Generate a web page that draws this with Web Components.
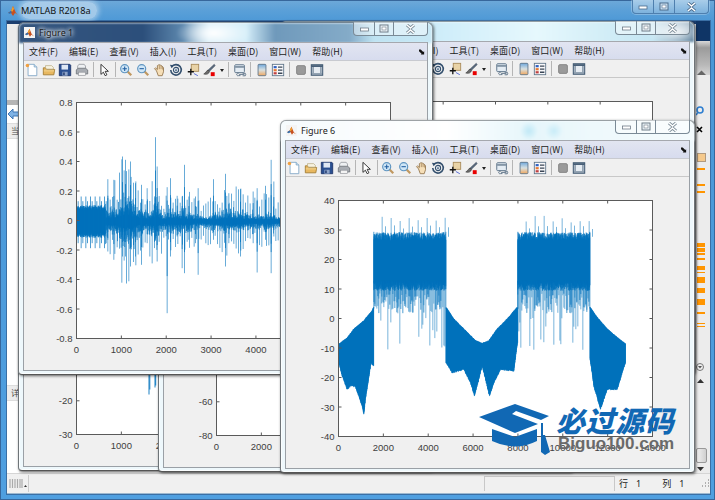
<!DOCTYPE html>
<html>
<head>
<meta charset="utf-8">
<style>
  html, body { margin: 0; padding: 0; background: #4a90d0; }
</style>
</head>
<body>
<ml-main>
  <ml-figure x="18" y="118" label="Figure 2">
    <ml-plot xstep="1000" ymax="40" ystep="10" ymin="-30" signal="stub"></ml-plot>
  </ml-figure>
  <ml-figure x="158" y="119" label="Figure 3">
    <ml-plot xstep="2000" ymax="60" ystep="20" ymin="-80"></ml-plot>
  </ml-figure>
  <ml-figure x="280" y="21" label="Figure 5" style="--glass:radial-gradient(ellipse 30px 14px at 395px 10px,#ffffffcc,transparent),linear-gradient(90deg,#a8cfe6,#d0eefa 40%,#e6f8fd 62%,#c4e6f3 90%,#49708f 100%)">
    <ml-plot xstep="2000" intervals="6" ymax="40" ystep="10" ymin="-40"></ml-plot>
  </ml-figure>
  <ml-figure x="18" y="22" label="Figure 1" style="--glass:radial-gradient(ellipse 38px 16px at 195px 10px,#ffffff,transparent),linear-gradient(90deg,#35567f 0,#2c4f7b 30%,#5f8ab0 40%,#cfeaf7 46%,#d4eef9 55%,#6f99bb 62%,#84abc8 80%,#bfe3f2 86%,#c8e8f5 100%)">
    <ml-plot xstep="1000" ymax="0.8" ystep="0.2" ymin="-0.8" signal="fig1"></ml-plot>
  </ml-figure>
  <ml-figure x="280" y="120" label="Figure 6" style="--glass:radial-gradient(circle 9px at 248px 10px,#bfe8f6,transparent),radial-gradient(circle 9px at 273px 10px,#c8ecf8,transparent),linear-gradient(90deg,#f6fbfd,#ffffff 40%,#e6f6fb 60%,#eef9fc 75%,#f4fbfd 100%)">
    <ml-plot xstep="2000" ymax="40" ystep="10" ymin="-40" signal="fig6"></ml-plot>
  </ml-figure>
  <ml-watermark></ml-watermark>
</ml-main>

<script>
// small seeded generator so the plots come out the same every time
function seeded(a) {
  return function () {
    a = (a + 0x6D2B79F5) | 0;
    let t = Math.imul(a ^ (a >>> 15), 1 | a);
    t = (t + Math.imul(t ^ (t >>> 7), 61 | t)) ^ t;
    return ((t ^ (t >>> 14)) >>> 0) / 4294967296;
  };
}

function lerpTable(table, x) {
  if (x <= table[0][0]) return table[0][1];
  for (let i = 1; i < table.length; i++) {
    if (x <= table[i][0]) {
      const [x0, y0] = table[i - 1], [x1, y1] = table[i];
      return y0 + (y1 - y0) * (x - x0) / (x1 - x0);
    }
  }
  return table[table.length - 1][1];
}

const SIGNALS = {
  // envelopes were read off at 3x, so the tables stay in those units
  fig6() {
    const rnd = seeded(61);
    const top = [[25,450],[50,432],[70,405],[100,380],[125,350],[129,340],[347,340],[370,375],[400,405],[435,440],[455,448],[475,440],[500,405],[530,375],[560,340],[779,340],[800,370],[830,405],[860,430],[885,450]];
    const bot = [[25,510],[35,550],[50,590],[60,580],[75,582],[95,640],[100,665],[105,620],[122,510],[129,520],[347,510],[365,540],[400,530],[420,570],[432,610],[445,560],[455,520],[465,560],[477,610],[490,570],[510,530],[550,535],[561,450],[779,500],[790,580],[810,650],[830,590],[860,590],[885,510]];
    const inBlock = x => (x >= 130 && x <= 346) || (x >= 562 && x <= 778);
    let d = '', light = '';
    const seg = (x, a, b) => `M${((x - 24) / 3).toFixed(2)} ${((a - 21) / 3).toFixed(1)}V${((b - 21) / 3).toFixed(1)}`;
    for (let x = 25; x <= 885; x += 0.5) {
      if (inBlock(x)) {
        d += seg(x, 116 + rnd() * 26, 262 + rnd() * 30);
      } else {
        d += seg(x, lerpTable(top, x) + rnd() * 3, lerpTable(bot, x) - rnd() * 6);
      }
    }
    [130, 562].forEach(start => {
      for (let x = start + 25, i = 0; x < start + 218; x += 27, i++) {
        light += seg(x, 65 + rnd() * 22, 130);
        light += seg(x + 10, 95 + rnd() * 14, 130);
      }
      for (let x = start; x < start + 216; x += 3) {
        const r = rnd();
        const end = r > 0.8 ? 370 + rnd() * 100 : 300 + rnd() * 60;
        light += seg(x, 262, end);
        if (r < 0.45) d += seg(x, 262, 300 + rnd() * 60);
      }
      d += seg(start, 115, 345) + seg(start + 216, 115, 345);
    });
    return [{ d, width: 0.7 }, { d: light, width: 0.75, opacity: 0.7 }];
  },
  fig1() {
    const rnd = seeded(11);
    const amp = [[135,38],[160,46],[175,60],[190,92],[215,74],[240,40],[262,28],[285,62],[310,22],[330,36],[370,34],[420,16],[470,26],[500,36],[545,34],[570,18],[620,24],[660,16],[800,16]];
    const spikes = [[142,238,420],[160,240,480],[186,170,470],[195,180,470],[210,185,500],[225,250,470],[243,255,495],[260,265,430],[285,112,420],[290,200,485],[320,262,640],[330,235,470],[350,288,410],[365,290,505],[372,195,520],[385,290,420],[413,265,525],[405,290,430],[459,238,420],[495,222,500],[505,280,430],[540,268,470],[578,275,430],[590,265,518],[615,258,420],[632,180,520],[640,245,410]];
    const seg = (x, a, b) => `M${((x - 48) / 3).toFixed(2)} ${((a - 8) / 3).toFixed(1)}V${((b - 8) / 3).toFixed(1)}`;
    let d = '', light = '';
    for (let x = 48; x < 135; x += 14) {
      d += seg(x, 290, 445) + seg(x + 5, 304, 430);
    }
    for (let x = 48; x < 135; x += 0.5) {
      const a = 30 + rnd() * 16;
      d += seg(x, 362 - a, 362 + a + 6);
    }
    for (let x = 135; x < 800; x += 0.6) {
      const a = lerpTable(amp, x);
      const up = 0.2 + rnd() * rnd() * 1.1, down = 0.2 + rnd() * rnd() * 1.1;
      d += seg(x, 364 - a * up, 366 + a * down);
    }
    for (let x = 135; x < 800; x += 7) {
      const a = lerpTable(amp, x) + 18;
      light += seg(x, 362 - a * (0.8 + rnd() * 1.2), 362 + a * (0.8 + rnd() * 1.2));
    }
    spikes.forEach(([x, a, b]) => { light += seg(x, a, b); d += seg(x, a + (362 - a) * 0.4, b - (b - 362) * 0.4); });
    return [{ d, width: 0.7 }, { d: light, width: 0.8, opacity: 0.75 }];
  },
  stub() {
    // only the feet of the spectrum show below Figure 1
    const d = 'M72.500 160V196M73.300 160V191M78.500 160V189M79.200 160V187M82.500 160V193M83.500 160V187M84.500 160V191';
    return [{ d, width: 1, opacity: 0.9 }];
  }
};

const ICONS = {
  new: `<path d="M3.500 1.500h7l3 3v10h-10z" fill="#fff" stroke="#7fa6c6"/><path d="M10.500 1.500v3h3" fill="#dbe9f4" stroke="#7fa6c6"/><circle cx="2.800" cy="2.800" r="2" fill="#f0a040"/>`,
  open: `<path d="M1.500 5.500v8h12l1-6h-9l-1-2z" fill="#e8b860" stroke="#a07a30"/><path d="M4 5V3h7l2 2v2H5z" fill="#f7f2e0" stroke="#b0a070" stroke-width=".7"/><path d="M2 9h12" stroke="#f4d898"/>`,
  save: `<path d="M1.500 1.500h12l1 1v12h-13z" fill="#2a4f90" stroke="#1d3468"/><rect x="4" y="2" width="7.500" height="5.500" fill="#dfe8f4"/><rect x="5" y="10" width="6" height="4.500" fill="#8ea4c8"/><rect x="6" y="10.800" width="1.600" height="3" fill="#1d3468"/>`,
  print: `<path d="M4.500 1.500h6l1.500 2v4h-9v-4z" fill="#eef0f2" stroke="#9a9ea4"/><path d="M1.500 8l2-2h8.500l2.500 2v4.500h-13z" fill="#a8acb2" stroke="#74787e"/><rect x="4" y="10.500" width="8" height="4" fill="#f3f3f3" stroke="#8a8e94" stroke-width=".7"/>`,
  arrow: `<path d="M4.500 1.500v11.500l2.800-2.500 2 4 2-1-2-4h3.700z" fill="#fff" stroke="#222" stroke-linejoin="round"/>`,
  zoomin: `<path d="M9.500 9.500l4.500 4.500" stroke="#c09860" stroke-width="2.600"/><circle cx="6.500" cy="6.500" r="4.600" fill="#cfe6f6" stroke="#5e94c0" stroke-width="1.300"/><path d="M4 6.500h5M6.500 4v5" stroke="#1f5da0" stroke-width="1.200"/>`,
  zoomout: `<path d="M9.500 9.500l4.500 4.500" stroke="#c09860" stroke-width="2.600"/><circle cx="6.500" cy="6.500" r="4.600" fill="#cfe6f6" stroke="#5e94c0" stroke-width="1.300"/><path d="M4 6.500h5" stroke="#1f5da0" stroke-width="1.200"/>`,
  hand: `<path d="M4 9L1.800 6.500l1-1L5 7.500V3l1.300-.8L7.200 2l1 .2 1 .8 1 .3 1 1.200.8 1V10l-1.500 4.500H6z" fill="#f6dfb8" stroke="#8a6a40" stroke-width=".9"/><path d="M7.200 2.500V7M9.200 3v4M11 4.300V7.500" stroke="#8a6a40" stroke-width=".7"/>`,
  rotate: `<path d="M3 4.500A6 6 0 1 1 2 8" fill="none" stroke="#34506e" stroke-width="1.800"/><path d="M1 2l4.500.5L3 6z" fill="#34506e"/><circle cx="8" cy="8" r="3" fill="#dfe7ef" stroke="#34506e" stroke-width="1.200"/><circle cx="8" cy="8" r="1" fill="#34506e"/>`,
  cursor: `<rect x="6" y="1.500" width="8.500" height="8" fill="#e9d3a6" stroke="#a88a58"/><path d="M2 10h7M5.500 6.500V14" stroke="#111" stroke-width="1.500"/><path d="M9 12l4.500 2.500" stroke="#4a5fd0"/>`,
  brush: `<path d="M14 1.500L7 8l1.500 1.500L15 3z" fill="#5a6a7e" stroke="#3a4656" stroke-width=".6"/><path d="M7 8c-2 .5-2 3-5 4.500 2.500 1 6 .5 6.500-3z" fill="#6b6b6b" stroke="#222" stroke-width=".6"/><rect x="10" y="10.500" width="4.500" height="4.500" fill="#e80000"/>`,
  link: `<rect x="2" y="2" width="11" height="9" rx="1" fill="#e4ecf3" stroke="#5e7488" stroke-width="1.100"/><path d="M2.500 4.500h10" stroke="#5e7488" stroke-width="1.500"/><path d="M7 13h6M6.500 11.800a1.500 1.500 0 1 0 0 2.600h2M11 11.800h1.500a1.500 1.500 0 1 1 0 2.800H11" fill="none" stroke="#5e7488" stroke-width="1.100"/>`,
  colorbar: `<rect x="3.500" y="1.500" width="9" height="13" rx="1" fill="url(#cb)" stroke="#5e7488"/>`,
  legend: `<rect x="1.500" y="1.500" width="13" height="13" fill="#f8f8fa" stroke="#5e7488"/><rect x="3" y="3.500" width="3.500" height="2.500" fill="#3060c0"/><rect x="3" y="7" width="3.500" height="2.500" fill="#e87830"/><rect x="3" y="10.500" width="3.500" height="2.500" fill="#c04040"/><path d="M8 4.700h5M8 8.200h5M8 11.700h5" stroke="#3a4656" stroke-width="1.500"/>`,
  square: `<rect x="3" y="3" width="10" height="10" rx="1.500" fill="#9a9a9a" stroke="#808080"/>`,
  window: `<rect x="1.500" y="2" width="13" height="12" fill="#e6ecf2" stroke="#3f5870" stroke-width="1.200"/><path d="M1.500 3.500h13" stroke="#3f5870" stroke-width="2"/><path d="M3.500 4v7.500M12.500 4v7.500M2 12.500h12" stroke="#3f5870"/>`
};

class MlMain extends HTMLElement {
  constructor() {
    super();
    this.attachShadow({ mode: 'open' });
  }

  connectedCallback() {
    const marks = [[168,2],[184,2],[191,2],[243,4],[248,4],[253,2],[258,2],[266,4],[272,1],[277,6],[288,5],[299,6],[312,2],[323,1],[326,1]];
    this.shadowRoot.innerHTML = `
      <style>
        :host {
          display: block;
          position: relative;
          width: 715px;
          height: 500px;
          overflow: hidden;
          font-family: "Noto Sans", "Noto Sans CJK SC", sans-serif;
          background: linear-gradient(180deg, #6ea9d9 0, #5ba0d8 10px, #4a97d6 24px, #4f9fe0 100%);
          box-shadow: inset 0 0 0 1px #37679c;
        }
        .title {
          height: 21px;
          display: flex;
          align-items: center;
          padding-left: 8px;
          gap: 3px;
          font-size: 9.200px;
          color: #111;
        }
        .title span {
          padding: 2px 6px 2px 0;
          border-radius: 8px;
          background: #c4dcf0b0;
          box-shadow: 0 0 5px 2px #c4dcf0b0;
        }
        .controls {
          position: absolute;
          right: 6px;
          top: 0;
          display: flex;
          height: 13px;
          border: 1px solid #4e7fae;
          border-top: 0;
          border-radius: 0 0 4px 4px;
          background: linear-gradient(#a9cde9, #7db2dd);
          box-shadow: 0 0 0 1px #ffffff40;
        }
        .controls i {
          display: flex;
          align-items: center;
          justify-content: center;
          height: 13px;
          border-left: 1px solid #4e7fae;
        }
        .controls i:first-child { border-left: 0; }
        .client {
          height: 473px;
          margin: 0 5px 0 7px;
          display: flex;
          flex-direction: column;
          background: #f0f0f0;
          box-shadow: 0 0 0 1px #3a6fa5;
        }
        .work {
          flex: 1;
          display: flex;
          min-height: 0;
          border-bottom: 1px solid #d5d5d5;
        }
        .left {
          width: 12px;
          background: #fff;
          display: flex;
          flex-direction: column;
          font-size: 8px;
          color: #444;
        }
        .left .navy { height: 3px; background: #1b3e6f; }
        .left .grey { height: 76px; background: #ececec; border-bottom: 5px solid #b5b5b5; }
        .left .back { height: 18px; display: flex; align-items: center; }
        .left .tab { height: 14px; background: #ececec; border: solid #ddd; border-width: 1px 0; text-align: right; line-height: 13px; }
        .left .fill { flex: 1; }
        .mid { flex: 1; background: #f0f0f0; border-top: 3px solid #1b3e6f; }
        .right {
          width: 14px;
          display: flex;
          flex-direction: column;
          background: #ececec;
          position: relative;
        }
        .right .navy { height: 20px; background: #0f3566; }
        .right .head { height: 34px; background: linear-gradient(#d8d8d8 0, #9b9b9b 20%, #b8b8b8 70%, #d5d5d5); }
        .right .mark { position: absolute; left: 1px; width: 8px; background: #ff9500; }
        .right .box { position: absolute; left: 1px; top: 132px; width: 7px; height: 7px; background: #f5c98c; border: 1px solid #b09a80; }
        .right .thumb { position: absolute; left: 0; top: 427px; width: 9px; height: 13px; background: linear-gradient(90deg, #f0f0f0, #cfcfcf); border: 1px solid #999; border-radius: 2px; }
        .right svg { position: absolute; }
        .status {
          height: 19px;
          display: flex;
          align-items: center;
          background: #f0f0f0;
          font-size: 9px;
          color: #222;
          border-bottom: 1px solid #9db8cf;
        }
        .status .grip { width: 22px; padding-left: 2px; box-sizing: border-box; height: 17px; display: flex; align-items: center; border-right: 1px solid #ccc; }
        .status .spacer { flex: 1; }
        .status .box { width: 131px; height: 15px; border: solid #c8c8c8; border-width: 1px 1px 0 1px; box-sizing: border-box; }
        .status .pos { width: 82px; display: flex; padding-left: 4px; box-sizing: border-box; white-space: nowrap; }
        .status .gap8 { margin-right: 8px; }
        .status .gap21 { margin-right: 21px; }
      </style>
      <div class="title">
        <svg width="10" height="12" viewBox="0 0 10 12"><path d="M0 8l3-2 2-5 3 7 2 2-3-2-2 3-2-3z" fill="#c8501e"/><path d="M3 6l2-5 1 3-2 3z" fill="#f0a030"/><path d="M0 8l3-2 1 1-2 2z" fill="#2f6fb0"/></svg>
        <span>MATLAB R2018a</span>
      </div>
      <div class="controls">
        <i style="width:20px"><svg width="11" height="6"><rect x="1" y="2" width="8" height="3" fill="#fff" stroke="#4a6a8a" stroke-width=".8"/></svg></i>
        <i style="width:20px"><svg width="11" height="9"><rect x="1" y="1" width="8" height="7" fill="#cfe3f2" stroke="#4a6a8a" stroke-width="1"/><rect x="3" y="3" width="4" height="3" fill="#fff" stroke="#4a6a8a" stroke-width=".6"/></svg></i>
        <i style="width:33px"><svg width="11" height="10" viewBox="0 0 11 10"><path d="M2 1l3.500 3L9 1M2 9l3.500-3L9 9" fill="none" stroke="#4a6a8a" stroke-width="3"/><path d="M2 1l3.500 3L9 1M2 9l3.500-3L9 9" fill="none" stroke="#fff" stroke-width="1.400"/></svg></i>
      </div>
      <div class="client">
        <div class="work">
          <div class="left">
            <div class="navy"></div>
            <div class="grey"></div>
            <div class="back"><svg width="12" height="12"><path d="M1 6l5-5v3h6v4H6v3z" fill="#7fb2e4" stroke="#3f77b5"/></svg></div>
            <div class="tab">当</div>
            <div class="fill"></div>
            <div class="tab">详</div>
            <div class="fill" style="flex:0 0 72px"></div>
          </div>
          <div class="mid"></div>
          <div class="right">
            <div class="navy"></div>
            <div class="head"><svg style="left:1px;top:49px" width="9" height="5"><path d="M0 5l4.500-4.500L9 5z" fill="#666"/></svg></div>
            ${marks.map(([y, h]) => `<div class="mark" style="top:${y - 21}px;height:${h}px"></div>`).join('')}
            <div class="box"></div>
            <svg style="left:0;top:85px" width="10" height="11"><circle cx="4" cy="4" r="3" fill="none" stroke="#2f7fd0" stroke-width="1.600"/><path d="M1.500 7L0 9" stroke="#2f7fd0" stroke-width="1.500"/></svg>
            <svg style="left:0;top:105px" width="8" height="8"><path d="M1 1l5 5M6 1L1 6" stroke="#000" stroke-width="1.600"/></svg>
            <svg style="left:0;top:342px" width="9" height="9"><circle cx="4" cy="4" r="3.500" fill="#eee" stroke="#777"/><path d="M2 3l2 2.500L6 3z" fill="#555"/></svg>
            <svg style="left:1px;top:358px" width="7" height="5"><path d="M0 4l3.500-4L7 4z" fill="#333"/></svg>
            <div class="thumb"></div>
            <svg style="left:1px;top:446px" width="7" height="5"><path d="M0 0l3.500 4L7 0z" fill="#333"/></svg>
          </div>
        </div>
        <div class="status">
          <div class="grip"><svg width="18" height="11"><path d="M1 1v9M3.500 1v9M6 1v9M8.500 1v9M11 1v9M13 1v9" stroke="#aaa" stroke-width="1.200"/><path d="M15 9l1.500-2L18 9z" fill="#333"/></svg></div>
          <div class="spacer"></div>
          <div class="box"></div>
          <div class="pos"><span class="gap8">行</span><span class="gap21">1</span><span class="gap8">列</span><span>1</span></div>
          <svg width="9" height="9" style="margin-left:4px"><path d="M7 1h1M4 4h1M7 4h1M1 7h1M4 7h1M7 7h1" stroke="#999" stroke-width="1.500"/></svg>
        </div>
      </div>
      <slot></slot>
    `;
  }
}

class MlMenu extends HTMLElement {
  constructor() {
    super();
    this.attachShadow({ mode: 'open' });
  }

  connectedCallback() {
    const items = ['文件(F)', '编辑(E)', '查看(V)', '插入(I)', '工具(T)', '桌面(D)', '窗口(W)', '帮助(H)'];
    this.shadowRoot.innerHTML = `
      <style>
        :host {
          display: flex;
          align-items: center;
          box-sizing: border-box;
          height: 19px;
          padding: 0 2px 0 5px;
          gap: 11px;
          background: linear-gradient(#e2e5f1, #d7dcee);
          border-top: 1px solid #a5a8ae;
          border-bottom: 1px solid #c8cad0;
          font: 9px "Noto Sans CJK SC", "Noto Sans", sans-serif;
          color: #222;
          white-space: nowrap;
        }
        svg { margin-left: auto; }
      </style>
      ${items.map(t => `<span>${t}</span>`).join('')}
      <svg width="6" height="6" viewBox="0 0 7 7"><path d="M0 0.500h2l3 3 1-1v4H2l1-1-3-3z" fill="#111"/></svg>
    `;
  }
}

class MlToolbar extends HTMLElement {
  constructor() {
    super();
    this.attachShadow({ mode: 'open' });
  }

  connectedCallback() {
    const row = ['new', 'open', 'save', 'print', '|', 'arrow', '|', 'zoomin', 'zoomout', 'hand', 'rotate', 'cursor', 'brush', 'v', '|', 'link', '|', 'colorbar', 'legend', '|', 'square', 'window'];
    const cell = name => {
      if (name === '|') return '<u></u>';
      if (name === 'v') return '<svg class="drop" width="8" height="16"><path d="M2 7h4L4 10z" fill="#222"/></svg>';
      return `<span><svg width="14" height="14" viewBox="0 0 16 16">${ICONS[name]}</svg></span>`;
    };
    this.shadowRoot.innerHTML = `
      <style>
        :host {
          display: flex;
          align-items: center;
          box-sizing: border-box;
          height: 18px;
          background: #f0f0f0;
          border-bottom: 1px solid #c8c8c8;
        }
        span { flex: none; width: 16.600px; display: flex; justify-content: center; }
        span svg { filter: blur(.3px); }
        svg.drop { flex: none; }
        u { flex: none; width: 1px; height: 15px; background: #b5b5b5; margin: 0 2.300px; }
      </style>
      <svg width="0" height="0" style="position:absolute"><defs><linearGradient id="cb" x1="0" y1="0" x2="0" y2="1"><stop offset="0" stop-color="#6fa8dc"/><stop offset=".5" stop-color="#d8e0e0"/><stop offset="1" stop-color="#f0a860"/></linearGradient></defs></svg>
      ${row.map(cell).join('')}
    `;
  }
}

class MlFigure extends HTMLElement {
  constructor() {
    super();
    this.attachShadow({ mode: 'open' });
  }

  connectedCallback() {
    this.style.left = this.getAttribute('x') + 'px';
    this.style.top = this.getAttribute('y') + 'px';
    this.shadowRoot.innerHTML = `
      <style>
        :host {
          display: block;
          position: absolute;
          width: 415px;
          height: 353px;
          box-sizing: border-box;
          padding: 0 4px 5px;
          border: 1px solid #6e7478;
          border-bottom-color: #555;
          border-radius: 6px 6px 4px 4px;
          background: #eef8fc;
          box-shadow: 1px 1px 3px #0009, inset 0 0 0 1px #ffffffb0;
        }
        .glass {
          position: absolute;
          left: 0;
          right: 0;
          top: 0;
          height: 20px;
          border-radius: 5px 5px 0 0;
          background: var(--glass, #dff2fa);
          filter: blur(1px);
        }
        .title {
          position: relative;
          height: 19px;
          display: flex;
          align-items: center;
          gap: 4px;
          padding-left: 1px;
          font: 9px "Noto Sans", sans-serif;
          color: #1a1a1a;
        }
        .title span { text-shadow: 0 0 4px #fff, 0 0 4px #fff, 0 0 6px #fff; }
        .title svg { background: #f4f4f4; flex: none; }
        .controls {
          position: absolute;
          right: 4px;
          top: -1px;
          height: 13px;
          display: flex;
          border: 1px solid #7a8a96;
          border-top: 0;
          border-radius: 0 0 4px 4px;
          background: #ffffff70;
        }
        .controls i {
          display: flex;
          align-items: center;
          justify-content: center;
          border-left: 1px solid #7a8a96;
        }
        .controls i:first-child { border-left: 0; }
        .client {
          position: relative;
          height: 328px;
          display: flex;
          flex-direction: column;
          border: 1px solid #9aa0a6;
          border-top: 0;
          background: #f0f0f0;
        }
        .canvas { flex: 1; min-height: 0; }
      </style>
      <div class="glass"></div>
      <div class="title">
        <svg width="11" height="11" viewBox="0 0 12 12"><path d="M1 8l3-2 2-4 2.500 6L11 10 8 8.500 6.500 10.500 5 8z" fill="#c8501e"/><path d="M4 6l2-4 .800 3-2 2z" fill="#f0a030"/><path d="M1 8l3-2 1 1.500-2 1.500z" fill="#2f6fb0"/></svg>
        <span>${this.getAttribute('label')}</span>
      </div>
      <div class="controls">
        <i style="width:20px"><svg width="11" height="6"><rect x="1.500" y="2" width="8" height="3" fill="#fff" stroke="#6f7c88" stroke-width=".8"/></svg></i>
        <i style="width:18px"><svg width="11" height="9"><rect x="1" y="1" width="8" height="7" fill="#eef6fa" stroke="#6f7c88"/><rect x="3" y="3" width="4" height="3" fill="#fff" stroke="#6f7c88" stroke-width=".6"/></svg></i>
        <i style="width:33px"><svg width="11" height="10" viewBox="0 0 11 10"><path d="M2 1l3.500 3L9 1M2 9l3.500-3L9 9" fill="none" stroke="#7a8a96" stroke-width="3"/><path d="M2 1l3.500 3L9 1M2 9l3.500-3L9 9" fill="none" stroke="#fff" stroke-width="1.400"/></svg></i>
      </div>
      <div class="client">
        <ml-menu></ml-menu>
        <ml-toolbar></ml-toolbar>
        <div class="canvas"><slot></slot></div>
      </div>
    `;
  }
}

class MlPlot extends HTMLElement {
  constructor() {
    super();
    this.attachShadow({ mode: 'open' });
  }

  connectedCallback() {
    // axes box inside the grey figure area, same for every figure
    const L = 52.5, T = 23.5, W = 314, H = 236;
    const num = n => this.getAttribute(n);
    const ymax = +num('ymax'), ymin = +num('ymin'), ystep = +num('ystep');
    const xstep = +num('xstep'), intervals = +(num('intervals') || 7);
    const ny = Math.round((ymax - ymin) / ystep);
    let ticks = '', labels = '';
    for (let i = 0; i <= intervals; i++) {
      const x = L + W * i / intervals;
      ticks += `M${x} ${T}v3M${x} ${T + H}v-3`;
      labels += `<text x="${x}" y="${T + H + 14}" text-anchor="middle">${i * xstep}</text>`;
    }
    for (let i = 0; i <= ny; i++) {
      const y = T + H * i / ny;
      const v = +(ymax - i * ystep).toFixed(4);
      ticks += `M${L} ${y}h3M${L + W} ${y}h-3`;
      labels += `<text x="${L - 4}" y="${y + 3.500}" text-anchor="end">${v}</text>`;
    }
    const sig = num('signal');
    const lines = sig ? SIGNALS[sig]() : [];
    const paths = lines.map(l => `<path d="${l.d}" fill="none" stroke="#0072bd" stroke-width="${l.width}" opacity="${l.opacity || 1}"/>`).join('');
    const id = 'clip' + sig;
    this.shadowRoot.innerHTML = `
      <style>
        :host { display: block; }
        svg { display: block; }
        text { font: 9.500px "Liberation Sans", sans-serif; fill: #404040; }
      </style>
      <svg width="403" height="290">
        <defs><clipPath id="${id}"><rect width="${W}" height="${H}"/></clipPath></defs>
        <rect x="${L}" y="${T}" width="${W}" height="${H}" fill="#fff"/>
        <g transform="translate(${L} ${T})" clip-path="url(#${id})">${paths}</g>
        <rect x="${L}" y="${T}" width="${W}" height="${H}" fill="none" stroke="#5a5a5a"/>
        <path d="${ticks}" stroke="#5a5a5a" fill="none"/>
        ${labels}
      </svg>
    `;
  }
}

class MlWatermark extends HTMLElement {
  constructor() {
    super();
    this.attachShadow({ mode: 'open' });
  }

  connectedCallback() {
    this.shadowRoot.innerHTML = `
      <style>
        :host {
          display: flex;
          position: absolute;
          left: 479px;
          top: 403px;
          width: 200px;
          height: 54px;
          gap: 5px;
        }
        svg { flex: none; }
        .words { display: flex; flex-direction: column; }
        .cn {
          font: italic 900 29px/32px "Noto Sans CJK SC", sans-serif;
          color: #1168b4;
          letter-spacing: .6px;
          white-space: nowrap;
        }
        .en {
          font: 700 17px/17px "Liberation Sans", sans-serif;
          color: #6a6a6a;
          padding-left: 2px;
          white-space: nowrap;
        }
      </style>
      <svg width="72" height="54" viewBox="479 403 72 54" fill="#1168b4">
        <path d="M479 417L515 404 549 416 541 420 516 411 512 414 538 424 515 433z"/>
        <path d="M492 429L515 437 537 429V441Q515 452 492 441z"/>
        <path d="M541 423h2v12h2l5 17-5 3-4-3z"/>
      </svg>
      <div class="words">
        <div class="cn">必过源码</div>
        <div class="en">Biguo100.com</div>
      </div>
    `;
  }
}

customElements.define('ml-main', MlMain);
customElements.define('ml-menu', MlMenu);
customElements.define('ml-toolbar', MlToolbar);
customElements.define('ml-figure', MlFigure);
customElements.define('ml-plot', MlPlot);
customElements.define('ml-watermark', MlWatermark);
</script>
</body>
</html>
